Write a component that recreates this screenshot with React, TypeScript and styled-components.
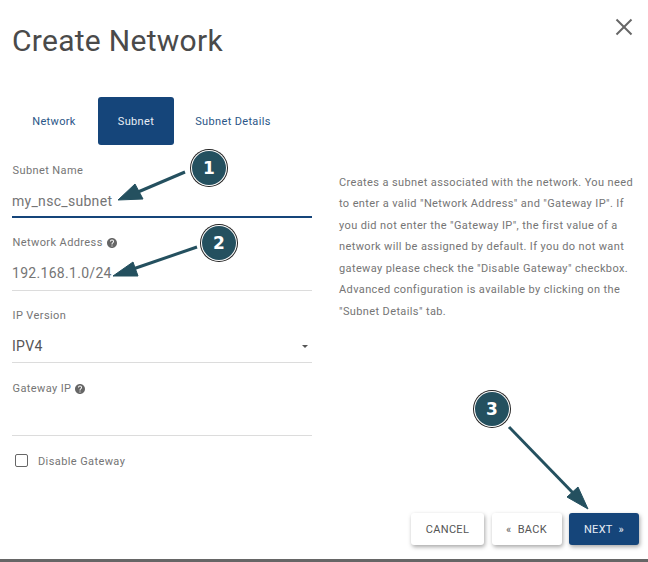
import React from 'react';
import styled, { createGlobalStyle } from 'styled-components';
import { MdHelp } from 'react-icons/md';

const GlobalStyle = createGlobalStyle`
    html, body {
        margin: 0;
        padding: 0;
        background: #fff;
        font-family: Roboto, "Liberation Sans", sans-serif;
    }
    * { box-sizing: border-box; }
`
const Page = styled.div`
    position: relative;
    width: 648px;
    height: 562px;
    overflow: hidden;
    display: flex;
    flex-direction: column;
    background: #fff;
`
const Header = styled.div`
    display: flex;
    justify-content: space-between;
    align-items: flex-start;
    padding: 22px 15px 0 12px;
    height: 97px;
`
const Title = styled.h1`
    margin: 0;
    font-size: 30px;
    line-height: 38px;
    font-weight: 400;
    letter-spacing: 0.28px;
    color: #4a4a4a;
`
const CloseButton = styled.div`
    width: 18px;
    height: 18px;
    margin-top: -4px;
    color: #666;
`
const Tabs = styled.div`
    display: flex;
    padding-left: 10px;
    height: 48px;
`
const Tab = styled.div<{ $active?: boolean; $width: number }>`
    width: ${props => props.$width}px;
    display: flex;
    align-items: center;
    justify-content: center;
    font-size: 11px;
    font-weight: 400;
    letter-spacing: 0.35px;
    border-radius: 3px;
    background: ${props => props.$active ? '#15457a' : 'transparent'};
    color: ${props => props.$active ? '#e8eef5' : '#2b5687'};
`
const Body = styled.div`
    display: grid;
    grid-template-columns: 300px 1fr;
    column-gap: 27px;
    padding: 0 10px 0 12px;
    height: 368px;
`
const Form = styled.div`
    display: flex;
    flex-direction: column;
    padding-top: 19px;
`
const Field = styled.div<{ $height: number; $focused?: boolean }>`
    height: ${props => props.$height}px;
    display: flex;
    flex-direction: column;
    border-bottom: ${props => props.$focused ? '2px solid #15457a' : '1px solid #dcdcdc'};
`
const Label = styled.label`
    display: flex;
    align-items: center;
    gap: 3px;
    padding-left: 0.5px;
    font-size: 11px;
    line-height: 14px;
    letter-spacing: 0.4px;
    color: #757575;
`
const Value = styled.div`
    display: flex;
    justify-content: space-between;
    align-items: center;
    margin-top: 14px;
    font-size: 14px;
    line-height: 18px;
    letter-spacing: 0.3px;
    color: ${props => props.color || '#757575'};
`
const Caret = styled.span`
    width: 0;
    height: 0;
    margin-right: 4px;
    border-left: 3px solid transparent;
    border-right: 3px solid transparent;
    border-top: 3px solid #555;
`
const Spacer = styled.div<{ $height: number }>`
    height: ${props => props.$height}px;
    flex-shrink: 0;
`
const CheckRow = styled.div`
    display: flex;
    align-items: center;
    gap: 10px;
    padding-left: 3px;
    margin-top: 19px;
    font-size: 11px;
    letter-spacing: 0.4px;
    color: #757575;
`
const CheckBox = styled.span`
    width: 13px;
    height: 13px;
    margin-top: -2px;
    border: 1.5px solid #666;
    border-radius: 2px;
`
const Description = styled.p`
    margin: 0;
    padding-top: 27px;
    font-size: 11px;
    line-height: 21.45px;
    letter-spacing: 0.38px;
    color: #757575;
`
const Footer = styled.div`
    display: flex;
    justify-content: flex-end;
    gap: 7.5px;
    padding-right: 9px;
    height: 46px;
`
const ActionButton = styled.div<{ $primary?: boolean; $width: number }>`
    width: ${props => props.$width}px;
    height: 32px;
    display: flex;
    align-items: center;
    justify-content: center;
    font-size: 11px;
    letter-spacing: 0.3px;
    border-radius: 3px;
    background: ${props => props.$primary ? '#15457a' : '#fff'};
    color: ${props => props.$primary ? '#e8eef5' : '#555'};
    box-shadow: 1px 2px 4px rgba(0, 0, 0, 0.35);
`
const BottomBar = styled.div`
    height: 3px;
    background: #666;
`
const ArrowLayer = styled.svg`
    position: absolute;
    left: 0;
    top: 0;
    pointer-events: none;
`
const Badge = styled.div<{ $x: number; $y: number }>`
    position: absolute;
    left: ${props => props.$x - 17}px;
    top: ${props => props.$y - 17}px;
    width: 34px;
    height: 34px;
    border-radius: 50%;
    display: flex;
    align-items: center;
    justify-content: center;
    background: #24505f;
    color: #fff;
    font-family: "DejaVu Sans", sans-serif;
    font-weight: 700;
    font-size: 17px;
    box-shadow: 0 0 0 1px #fff, 0 0 0 2px #222;
`

const arrows = [
    { line: '185,172 138,192', head: '118,200 135,184 143,199' },
    { line: '197,247 133,269', head: '113,276 133,262 138,276' },
    { line: '509,427 575,495', head: '588,509 567,497 578,487' },
]

const App: React.FC = () => {
    return (
        <Page>
            <GlobalStyle />
            <Header>
                <Title>Create Network</Title>
                <CloseButton>
                    <svg width="18" height="18" viewBox="0 0 18 18" stroke="currentColor" strokeWidth="2">
                        <line x1="1.5" y1="1.5" x2="16.5" y2="16.5" />
                        <line x1="16.5" y1="1.5" x2="1.5" y2="16.5" />
                    </svg>
                </CloseButton>
            </Header>
            <Tabs>
                <Tab $width={88}>Network</Tab>
                <Tab $width={76} $active>Subnet</Tab>
                <Tab $width={118}>Subnet Details</Tab>
            </Tabs>
            <Body>
                <Form>
                    <Field $height={54} $focused>
                        <Label>Subnet Name</Label>
                        <Value>my_nsc_subnet</Value>
                    </Field>
                    <Spacer $height={18} />
                    <Field $height={55}>
                        <Label>Network Address <MdHelp size={12} color="#666" /></Label>
                        <Value>192.168.1.0/24</Value>
                    </Field>
                    <Spacer $height={18} />
                    <Field $height={54}>
                        <Label>IP Version</Label>
                        <Value color="#555">IPV4<Caret /></Value>
                    </Field>
                    <Spacer $height={19} />
                    <Field $height={54}>
                        <Label>Gateway IP <MdHelp size={12} color="#666" /></Label>
                    </Field>
                    <CheckRow>
                        <CheckBox />
                        Disable Gateway
                    </CheckRow>
                </Form>
                <Description>
                    Creates a subnet associated with the network. You need to enter a valid "Network Address" and "Gateway IP". If you did not enter the "Gateway IP", the first value of a network will be assigned by default. If you do not want gateway please check the "Disable Gateway" checkbox. Advanced configuration is available by clicking on the "Subnet Details" tab.
                </Description>
            </Body>
            <Footer>
                <ActionButton $width={73}>CANCEL</ActionButton>
                <ActionButton $width={70}>«&nbsp; BACK</ActionButton>
                <ActionButton $width={70} $primary>NEXT &nbsp;»</ActionButton>
            </Footer>
            <BottomBar />
            <ArrowLayer width="648" height="562">
                {arrows.map(arrow => (
                    <g key={arrow.head} fill="#24505f" stroke="#24505f">
                        <polyline points={arrow.line} strokeWidth="3" fill="none" />
                        <polygon points={arrow.head} strokeWidth="1" />
                    </g>
                ))}
            </ArrowLayer>
            <Badge $x={209} $y={168}>1</Badge>
            <Badge $x={219} $y={243}>2</Badge>
            <Badge $x={492} $y={409}>3</Badge>
        </Page>
    );
}

export default App;
